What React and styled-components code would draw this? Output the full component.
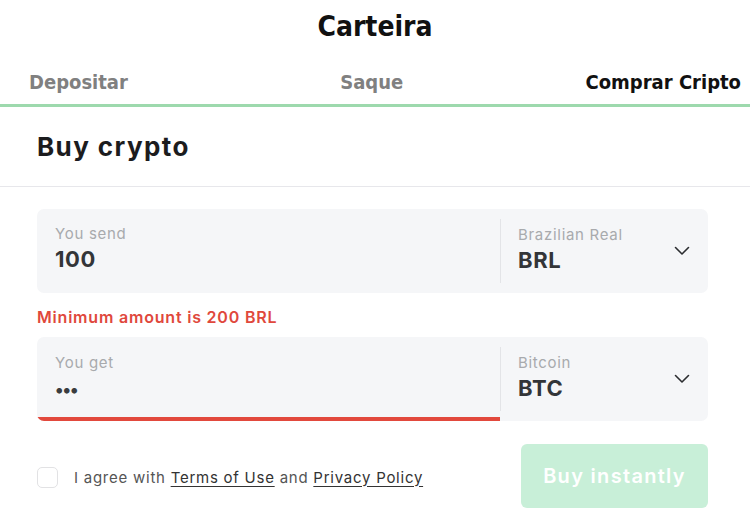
import React from 'react';
import styled, { createGlobalStyle } from 'styled-components';

const Global = createGlobalStyle`
  html, body { margin: 0; padding: 0; background: #fff; }
  body { font-family: Inter, "Noto Sans", sans-serif; color: #222; }
  * { box-sizing: border-box; }
`;

const Page = styled.div`
  width: 750px;
  height: 520px;
  overflow: hidden;
  background: #fff;
`;

const Title = styled.h1`
  margin: 0;
  height: 54px;
  line-height: 54px;
  text-align: center;
  font-family: "DejaVu Sans Condensed", "Liberation Sans Narrow", "Liberation Sans", sans-serif;
  font-size: 28px;
  font-weight: 700;
  color: #111;
`;

const Tabs = styled.nav`
  display: flex;
  justify-content: space-between;
  align-items: center;
  height: 53px;
  padding: 6px 9px 0 29px;
  border-bottom: 3px solid #9dd9ad;
`;

const Tab = styled.span`
  font-family: "DejaVu Sans Condensed", "Liberation Sans Narrow", "Liberation Sans", sans-serif;
  font-size: 20px;
  font-weight: 700;
  margin-left: ${p => p.$shift || 0}px;
  color: ${p => (p.$active ? '#111' : '#808080')};
`;

const Heading = styled.h2`
  margin: 0;
  height: 80px;
  display: flex;
  align-items: center;
  padding: 0 37px;
  font-size: 26px;
  font-weight: 700;
  letter-spacing: 1.4px;
  color: #1c1c1e;
  border-bottom: 1px solid #e7e7eb;
`;

const Form = styled.div`
  padding: 22px 42px 0 37px;
`;

const Field = styled.div`
  display: flex;
  height: 84px;
  background: #f5f6f8;
  border-radius: 7px;
  overflow: hidden;
`;

const Amount = styled.div`
  flex: 1;
  display: flex;
  flex-direction: column;
  justify-content: center;
  padding: 0 18px;
  border-bottom: 4px solid ${p => (p.$error ? '#e2493d' : 'transparent')};
  padding-top: ${p => (p.$error ? '4px' : '0')};
`;

const Label = styled.span`
  font-size: 15px;
  line-height: 20px;
  letter-spacing: 0.7px;
  color: #a8aaad;
`;

const Value = styled.span`
  font-size: 22px;
  line-height: 30px;
  font-weight: 700;
  letter-spacing: 0.6px;
  color: #333538;
`;

const Dots = styled.span`
  font-size: 18px;
  line-height: 30px;
  font-weight: 700;
  letter-spacing: -1px;
  color: #3a3c3f;
  margin-top: 2px;
`;

const Currency = styled.div`
  width: 208px;
  margin: 10px 0;
  display: flex;
  align-items: center;
  justify-content: space-between;
  padding: 0 18px 0 17px;
  border-left: 1px solid #e3e4e7;
`;

const CurrencyText = styled.div`
  display: flex;
  flex-direction: column;
  margin-top: -2px;
`;

const Error = styled.div`
  margin: 14px 0 10px;
  font-size: 16px;
  line-height: 20px;
  font-weight: 600;
  letter-spacing: 0.8px;
  color: #e0483c;
`;

const Footer = styled.div`
  display: flex;
  align-items: center;
  justify-content: space-between;
  margin-top: 23px;
`;

const Agree = styled.label`
  display: flex;
  align-items: center;
  gap: 16px;
  font-size: 15px;
  letter-spacing: 0.75px;
  color: #555;
  margin-top: 2px;
`;

const Box = styled.span`
  width: 21px;
  height: 21px;
  border: 1.5px solid #e2e2e4;
  border-radius: 5px;
  background: #fff;
`;

const Link = styled.a`
  color: #333;
  text-decoration: underline;
  text-underline-offset: 3px;
`;

const BuyButton = styled.button`
  width: 187px;
  height: 64px;
  border: 0;
  border-radius: 6px;
  background: #c8efd8;
  color: #fff;
  font-family: inherit;
  font-size: 20px;
  font-weight: 600;
  letter-spacing: 1.3px;
`;

const Chevron = () => (
  <svg width="16" height="10" viewBox="0 0 16 10" fill="none">
    <polyline points="1.5,1.5 8,8 14.5,1.5" stroke="#2b2d30" strokeWidth="1.6" strokeLinecap="round" strokeLinejoin="round" />
  </svg>
);

export default function App() {
  return (
    <Page>
      <Global />
      <Title>Carteira</Title>
      <Tabs>
        <Tab>Depositar</Tab>
        <Tab $shift={30}>Saque</Tab>
        <Tab $active>Comprar Cripto</Tab>
      </Tabs>
      <Heading>Buy crypto</Heading>
      <Form>
        <Field>
          <Amount>
            <Label>You send</Label>
            <Value>100</Value>
          </Amount>
          <Currency>
            <CurrencyText>
              <Label>Brazilian Real</Label>
              <Value>BRL</Value>
            </CurrencyText>
            <Chevron />
          </Currency>
        </Field>
        <Error>Minimum amount is 200 BRL</Error>
        <Field>
          <Amount $error>
            <Label>You get</Label>
            <Dots>•••</Dots>
          </Amount>
          <Currency>
            <CurrencyText>
              <Label>Bitcoin</Label>
              <Value>BTC</Value>
            </CurrencyText>
            <Chevron />
          </Currency>
        </Field>
        <Footer>
          <Agree>
            <Box />
            <span>
              I agree with <Link>Terms of Use</Link> and <Link>Privacy Policy</Link>
            </span>
          </Agree>
          <BuyButton>Buy instantly</BuyButton>
        </Footer>
      </Form>
    </Page>
  );
}
